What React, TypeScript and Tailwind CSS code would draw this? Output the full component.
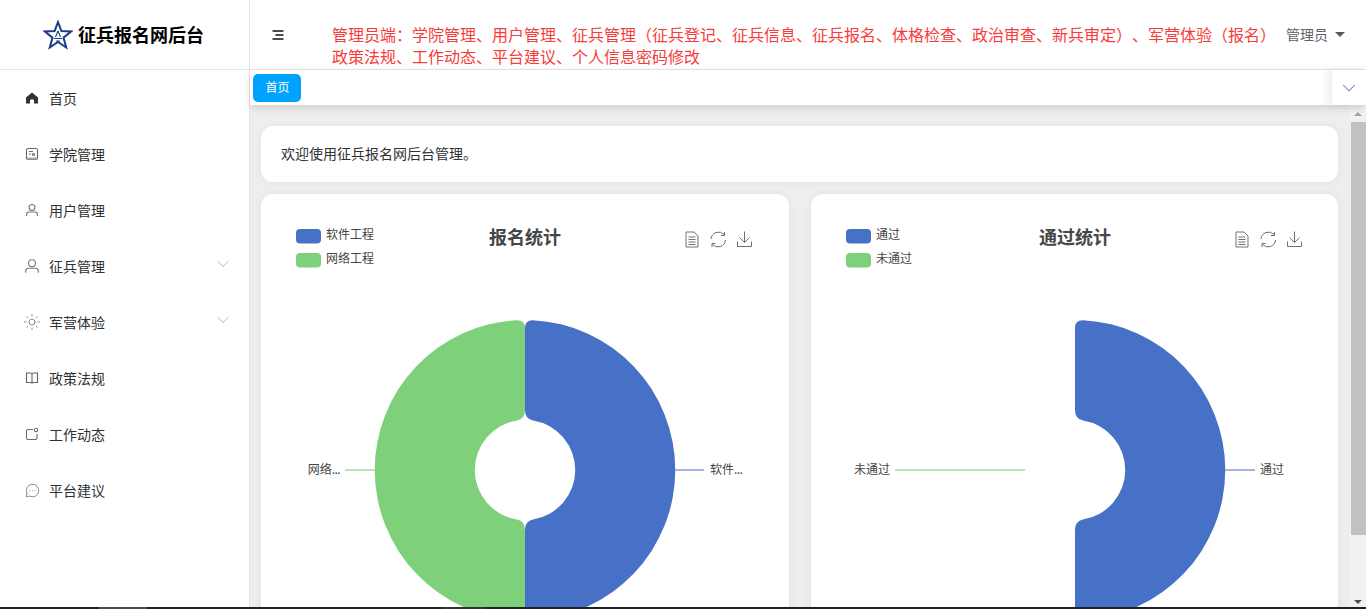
import { ChevronDown, MessageCircleMore, Sun } from "lucide-react";
import type { ReactNode } from "react";

const BLUE = "#4770c7";
const GREEN = "#7ed07b";

const rightHalf =
  "M0,-142 Q0,-150 8,-149.8 A150,150 0 0 1 8,149.8 Q0,150 0,142 L0,60 Q0,51 8,49.4 A50,50 0 0 0 8,-49.4 Q0,-51 0,-60 Z";

function HomeIcon() {
  return (
    <svg width="14" height="14" viewBox="0 0 14 14" fill="#303133">
      <path d="M7 1.5 L13 6.6 V12.5 H9 V9 Q7 7.4 5 9 V12.5 H1 V6.6 Z" />
    </svg>
  );
}

function CollegeIcon() {
  return (
    <svg width="14" height="14" viewBox="0 0 14 14" fill="none" stroke="#6f6a68" strokeWidth="1.1">
      <rect x="1.5" y="1.5" width="11" height="11" rx="1.5" />
      <path d="M4 4.5 H8 M4 7 H6" />
      <circle cx="8.5" cy="7.5" r="1" />
      <path d="M2 11.5 H12" stroke="#aaa" strokeWidth="2" />
    </svg>
  );
}

function UserIcon({ size }: { size: number }) {
  return (
    <svg width={size} height={size} viewBox="0 0 14 14" fill="none" stroke="#77777c" strokeWidth={size > 14 ? 1 : 1.1}>
      <circle cx="7" cy="4.5" r="3" />
      <path d="M1.5 13 V11.5 Q1.5 9 4 9 H10 Q12.5 9 12.5 11.5 V13" />
    </svg>
  );
}

function BookIcon() {
  return (
    <svg width="14" height="14" viewBox="0 0 14 14" fill="none" stroke="#5f6575" strokeWidth="1.1">
      <path d="M7 3 Q7 2 5.5 2 H1.5 V11.5 H5.5 Q7 11.5 7 12.5 Q7 11.5 8.5 11.5 H12.5 V2 H8.5 Q7 2 7 3 V12.5" />
    </svg>
  );
}

function NewsIcon() {
  return (
    <svg width="14" height="14" viewBox="0 0 14 14" fill="none" stroke="#6f6a68" strokeWidth="1.1">
      <path d="M8 2.5 H3 Q1.5 2.5 1.5 4 V11 Q1.5 12.5 3 12.5 H10.5 Q12 12.5 12 11 V7" />
      <circle cx="11" cy="3" r="1.7" />
    </svg>
  );
}

const menu: { label: string; icon: ReactNode; arrow?: boolean }[] = [
  { label: "首页", icon: <HomeIcon /> },
  { label: "学院管理", icon: <CollegeIcon /> },
  { label: "用户管理", icon: <UserIcon size={14} /> },
  { label: "征兵管理", icon: <UserIcon size={16} />, arrow: true },
  { label: "军营体验", icon: <Sun size={18} strokeWidth={1.1} color="#77777c" />, arrow: true },
  { label: "政策法规", icon: <BookIcon /> },
  { label: "工作动态", icon: <NewsIcon /> },
  { label: "平台建议", icon: <MessageCircleMore size={15} strokeWidth={1.2} color="#5f6575" /> },
];

function Sidebar() {
  return (
    <aside className="w-[250px] shrink-0 border-r border-[#e6e6e6] bg-white">
      {menu.map((item) => (
        <div key={item.label} className="flex h-14 items-center pr-[16px] text-sm text-[#303133]">
          <span className="flex w-[49px] shrink-0 justify-center pl-[15px]">{item.icon}</span>
          <span className="flex-1">{item.label}</span>
          {item.arrow && <ChevronDown size={20} strokeWidth={1} color="#a8a8ad" className="-mt-[4px]" />}
        </div>
      ))}
    </aside>
  );
}

function DocTool() {
  return (
    <g fill="none" stroke="#707070" strokeWidth="1">
      <path d="M1 1 H9 L13 5 V16 H1 Z" />
      <path d="M3.5 6 H10.5 M3.5 8.5 H10.5 M3.5 11 H10.5 M3.5 13.5 H10.5" />
    </g>
  );
}

function RestoreTool() {
  return (
    <g fill="none" stroke="#707070" strokeWidth="1">
      <path d="M1 8 A7.5 7.5 0 0 1 14 3.5 M15.5 9 A7.5 7.5 0 0 1 2.5 13.5" />
      <path d="M14.5 1 V4.5 H11 M2 16 V12.5 H5.5" />
    </g>
  );
}

function SaveTool() {
  return (
    <g fill="none" stroke="#707070" strokeWidth="1">
      <path d="M7.5 0.5 V11.5 M2.5 6.5 L7.5 11.5 L12.5 6.5" />
      <path d="M0.5 10.5 V15.5 H14.5 V10.5" />
    </g>
  );
}

type Leader = { text: string; dots?: boolean; textX: number; anchor: "start" | "end"; x1: number; x2: number; color: string };

function PieCard({
  title,
  legend,
  showGreen,
  leaders,
}: {
  title: string;
  legend: [string, string];
  showGreen: boolean;
  leaders: Leader[];
}) {
  return (
    <div className="h-[430px] rounded-t-xl bg-white shadow-[0_0_8px_rgba(0,0,0,0.06)]">
      <svg width="528" height="430" viewBox="0 0 528 430" style={{ fontFamily: '"Noto Sans CJK SC", sans-serif' }}>
        <rect x="35" y="35" width="25" height="14.5" rx="4" fill={BLUE} />
        <text x="65" y="45" fontSize="12" fill="#444">{legend[0]}</text>
        <rect x="35" y="59" width="25" height="14.5" rx="4" fill={GREEN} />
        <text x="65" y="69" fontSize="12" fill="#444">{legend[1]}</text>
        <text x="264" y="49.5" fontSize="18" fontWeight="700" fill="#464646" textAnchor="middle">{title}</text>
        <g transform="translate(424 37)"><DocTool /></g>
        <g transform="translate(449 37)"><RestoreTool /></g>
        <g transform="translate(476 37)"><SaveTool /></g>
        <g transform="translate(264 276)">
          <path d={rightHalf} fill={BLUE} />
          {showGreen && <path d={rightHalf} fill={GREEN} transform="scale(-1 1)" />}
        </g>
        {leaders.map((l) => (
          <g key={l.text}>
            <line x1={l.x1} x2={l.x2} y1="276" y2="276" stroke={l.color} strokeWidth="2" />
            <text x={l.textX} y="280" fontSize="12" fill="#444" textAnchor={l.anchor}>
              {l.text}
              {l.dots && <tspan letterSpacing="-0.6">...</tspan>}
            </text>
          </g>
        ))}
      </svg>
    </div>
  );
}

function Scrollbar() {
  return (
    <div className="flex w-4 shrink-0 flex-col items-center bg-[#f1f1f1]">
      <div className="flex h-[17px] items-center justify-center">
        <div className="h-0 w-0 border-x-[4px] border-b-[4px] border-x-transparent border-b-[#a3a3a3]" />
      </div>
      <div className="ml-px h-[413px] w-[15px] bg-[#c1c1c1]" />
      <div className="flex flex-1 items-end justify-center pb-[3px]">
        <div className="h-0 w-0 border-x-[4px] border-t-[4px] border-x-transparent border-t-[#505050]" />
      </div>
    </div>
  );
}

export default function App() {
  return (
    <div className="flex h-[609px] w-[1366px] flex-col overflow-hidden bg-white" style={{ fontFamily: '"Noto Sans CJK SC", sans-serif' }}>
      <div className="flex min-h-0 flex-1 flex-col">
        <header className="flex h-[70px] shrink-0 border-b border-[#e6e6e6]">
          <div className="flex w-[250px] shrink-0 items-center justify-center gap-[5px] border-r border-[#e6e6e6] pr-[2px]">
            <svg width="30" height="30" viewBox="0 0 30 30" fill="none" stroke="#1c3c8c">
              <path strokeWidth="2" d="M15 2 L18.4 11 L28 11.5 L20.5 17.6 L23.2 27.5 L15 22 L6.8 27.5 L9.5 17.6 L2 11.5 L11.6 11 Z" />
              <path strokeWidth="1.1" d="M15 11 L12.5 17 M15 11 L17.5 17 M11 18.5 H19 M13 21 H17" />
            </svg>
            <span className="text-[18px] font-bold text-black">征兵报名网后台</span>
          </div>
          <div className="flex flex-1 items-center pl-[22px]">
            <svg width="12" height="10" viewBox="0 0 12 10" fill="none" stroke="#111" strokeWidth="1.4" className="shrink-0">
              <path d="M0.5 1 H11.5 M3.5 5 H11.5 M0.5 9 H11.5" />
            </svg>
            <p className="ml-[48px] mt-[20px] w-[950px] shrink-0 text-base leading-[22px] text-[#f73b3b] [text-spacing-trim:space-all]">
              管理员端：学院管理、用户管理、征兵管理（征兵登记、征兵信息、征兵报名、体格检查、政治审查、新兵审定）、军营体验（报名）政策法规、工作动态、平台建议、个人信息密码修改
            </p>
            <span className="ml-[4px] text-[14px] text-[#606266]">管理员</span>
            <div className="ml-[7px] h-0 w-0 border-x-[5px] border-t-[5px] border-x-transparent border-t-[#55585e]" />
          </div>
        </header>
        <div className="flex min-h-0 flex-1">
          <Sidebar />
          <div className="flex min-w-0 flex-1 flex-col">
            <div className="relative z-10 flex h-[35px] shrink-0 items-start bg-white shadow-[0_3px_8px_rgba(0,0,0,0.12)]">
              <div className="ml-[3px] mt-1 flex h-7 w-12 items-center justify-center rounded-[5px] bg-[#00a2ff] pb-[2px] pl-[1px] text-xs text-white">首页</div>
              <div className="ml-auto flex h-[35px] w-[34px] items-center justify-center bg-white shadow-[-4px_0_8px_rgba(0,0,0,0.08)]">
                <ChevronDown size={22} strokeWidth={1.1} color="#5b7cb8" />
              </div>
            </div>
            <div className="flex min-h-0 flex-1 bg-[#eeeeee]">
              <main className="flex min-w-0 flex-1 flex-col gap-3 pl-[11px] pr-3 pt-[21px]">
                <div className="flex h-14 shrink-0 items-center rounded-xl bg-white pb-[2px] pl-5 text-sm text-[#303133] shadow-[0_0_8px_rgba(0,0,0,0.06)]">
                  欢迎使用征兵报名网后台管理。
                </div>
                <div className="grid grid-cols-2 gap-[22px]">
                  <PieCard
                    title="报名统计"
                    legend={["软件工程", "网络工程"]}
                    showGreen
                    leaders={[
                      { text: "软件", dots: true, textX: 449, anchor: "start", x1: 414, x2: 443, color: "#a3b7e3" },
                      { text: "网络", dots: true, textX: 79, anchor: "end", x1: 84, x2: 114, color: "#b8e6b5" },
                    ]}
                  />
                  <PieCard
                    title="通过统计"
                    legend={["通过", "未通过"]}
                    showGreen={false}
                    leaders={[
                      { text: "通过", textX: 449, anchor: "start", x1: 414, x2: 444, color: "#a3b7e3" },
                      { text: "未通过", textX: 79, anchor: "end", x1: 84, x2: 214, color: "#b8e6b5" },
                    ]}
                  />
                </div>
              </main>
              <Scrollbar />
            </div>
          </div>
        </div>
      </div>
      <div className="flex h-[2px] shrink-0 bg-[#1d2129]">
        <div className="ml-[99px] w-[48px] bg-[#4a4a4a]" />
        <div className="ml-[295px] w-[44px] bg-[#333]" />
      </div>
    </div>
  );
}
